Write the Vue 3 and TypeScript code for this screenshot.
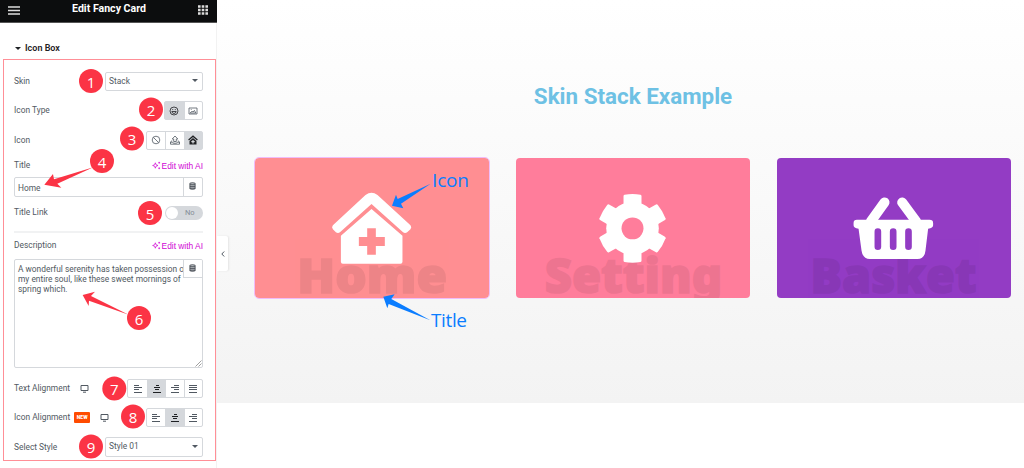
<template>
  <div class="page">
    <aside class="panel">
      <header class="panel-header">
        <svg class="menu" viewBox="0 0 12 9"><path d="M0 1h12M0 4.5h12M0 8h12" /></svg>
        <span>Edit Fancy Card</span>
        <svg class="apps" viewBox="0 0 10 10"><path d="M0 1.5h10M0 5h10M0 8.5h10" /></svg>
      </header>
      <div class="section-title"><i class="caret" />Icon Box</div>
      <div class="controls">
        <div class="row">
          <label>Skin</label>
          <div class="select">Stack<i class="caret" /></div>
        </div>
        <div class="row">
          <label>Icon Type</label>
          <div class="choices">
            <span class="active">
              <svg viewBox="0 0 10 10"><circle cx="5" cy="5" r="4" /><path d="M3.2 3.6h1M5.8 3.6h1M2.8 5.5h4.4Q6.8 7.5 5 7.5T2.8 5.5" /></svg>
            </span>
            <span>
              <svg viewBox="0 0 10 10"><path d="M1 2h8v6H1zM2.2 7l2-2 1 1 1.2-1.6L7.8 7zM2.8 3.5h.8" /></svg>
            </span>
          </div>
        </div>
        <div class="row">
          <label>Icon</label>
          <div class="choices">
            <span>
              <svg viewBox="0 0 10 10"><circle cx="5" cy="5" r="3.8" /><path d="M2.4 2.4l5.2 5.2" /></svg>
            </span>
            <span>
              <svg viewBox="0 0 10 10"><path d="M3.7 6.5V4H2.2L5 1 7.8 4H6.3v2.5zM2.2 5.6L.5 6.9v2.3h9V6.9L7.8 5.6M.8 7.2h2l.6 1h3.2l.6-1h2" /></svg>
            </span>
            <span class="active">
              <svg viewBox="0 0 10 10"><path class="bold" d="M.6 5L5 1.2 9.4 5" /><path class="solid" fill-rule="evenodd" d="M5 3.1l3.5 3V9.5h-7V6.1zM4.4 5v1.1H3.3v1.2h1.1v1.1h1.2V7.3h1.1V6.1H5.6V5z" /></svg>
            </span>
          </div>
        </div>
        <div class="row label-row title-label">
          <label>Title</label>
          <a class="ai"><svg viewBox="0 0 10 10"><path :d="sparklePath" /></svg>Edit with AI</a>
        </div>
        <div class="input">
          <span>Home</span>
          <i class="dynamic"><svg viewBox="0 0 8 9"><path :d="databasePath" /></svg></i>
        </div>
        <div class="row link-row">
          <label>Title Link</label>
          <div class="switch"><i />No</div>
        </div>
        <hr />
        <div class="row label-row">
          <label>Description</label>
          <a class="ai"><svg viewBox="0 0 10 10"><path :d="sparklePath" /></svg>Edit with AI</a>
        </div>
        <div class="textarea">
          A wonderful serenity has taken possession of<br />my entire soul, like these sweet mornings of<br />spring which.
          <i class="dynamic"><svg viewBox="0 0 8 9"><path :d="databasePath" /></svg></i>
          <svg class="grip" viewBox="0 0 7 7"><path d="M.5 6.5l6-6M3.5 6.5l3-3" /></svg>
        </div>
        <div class="row align-row">
          <label>Text Alignment</label>
          <svg class="monitor" viewBox="0 0 9 9"><path d="M1 1.5h7v5H1zM3 8.2h3" /></svg>
          <div class="choices">
            <span v-for="(d, i) in alignIcons" :key="i" :class="{ active: i === 1 }">
              <svg viewBox="0 0 10 10"><path class="lines" :d="d" /></svg>
            </span>
          </div>
        </div>
        <div class="row">
          <label>Icon Alignment</label>
          <b class="new">NEW</b>
          <svg class="monitor" viewBox="0 0 9 9"><path d="M1 1.5h7v5H1zM3 8.2h3" /></svg>
          <div class="choices">
            <span v-for="(d, i) in alignIcons.slice(0, 3)" :key="i" :class="{ active: i === 1 }">
              <svg viewBox="0 0 10 10"><path class="lines" :d="d" /></svg>
            </span>
          </div>
        </div>
        <div class="row">
          <label>Select Style</label>
          <div class="select">Style 01<i class="caret" /></div>
        </div>
      </div>
    </aside>

    <main class="preview">
      <h1>Skin Stack Example</h1>
      <div class="cards">
        <svg v-for="card in cards" :key="card.title" class="card" :class="card.kind" viewBox="0 0 702 421">
          <text :x="card.x" y="405" :textLength="card.width" lengthAdjust="spacingAndGlyphs">{{ card.title }}</text>
          <g v-if="card.kind === 'home'" transform="translate(-30 -25)">
            <path d="M362 136Q380 122 398 136L497 227Q502 233 497 239L487 248Q480 252 474 247L380 163 286 247Q280 252 273 248L264 239Q259 233 264 227Z" />
            <path fill-rule="evenodd" d="M380 178L473 258V336Q473 342 467 342H294Q288 342 288 336V258ZM367 236V262H342V289H367V315H393V289H420V262H393V236Z" />
          </g>
          <g v-else-if="card.kind === 'setting'" transform="translate(350 211)">
            <circle r="79" />
            <path v-for="n in 6" :key="n" :transform="`rotate(${n * 60})`" d="M-27-66V-97Q-27-100-24-101Q0-105 24-101Q27-100 27-97V-66Z" />
            <circle class="hole" r="33" />
          </g>
          <g v-else transform="translate(-38 -25)">
            <path class="handle" d="M361 158L320 215M414 158L456 215" />
            <path fill-rule="evenodd" d="M278 210H496Q507 210 507 220V227Q507 236 492 237L484 303Q481 328 460 328H317Q296 328 292 303L283 237Q268 236 268 227V220Q268 210 278 210ZM331 246V291A10 10 0 0 0 351 291V246A10 10 0 0 0 331 246ZM377 246V291A10 10 0 0 0 397 291V246A10 10 0 0 0 377 246ZM423 246V291A10 10 0 0 0 443 291V246A10 10 0 0 0 423 246Z" />
          </g>
        </svg>
      </div>
      <div class="collapse"><svg viewBox="0 0 4 6"><path d="M3.2.5L.8 3l2.4 2.5" /></svg></div>
    </main>

    <!-- numbered steps and arrows on top of the editor -->
    <svg class="notes" viewBox="0 0 1024 468">
      <g class="red">
        <path transform="translate(0 145) scale(.3333)" d="M280 67L162 103 159 87 133 119 184 128 172 116Z" />
        <path transform="translate(0 235) scale(.3333)" d="M386 239L273 183 285 170 248 180 266 213 267 197Z" />
        <g v-for="(step, i) in steps" :key="i" :transform="`translate(${step[0]} ${step[1]})`">
          <circle r="12" />
          <text y="6.6">{{ i + 1 }}</text>
        </g>
      </g>
      <g class="blue">
        <path transform="translate(245 150) scale(.3333)" d="M557 101L458 147 453 134 441 167 475 175 468 161Z" />
        <path transform="translate(245 150) scale(.3333)" d="M556 511L439 447 449 433 415 440 427 475 431 462Z" />
        <text x="432" y="186.5" textLength="37">Icon</text>
        <text x="431" y="326.5" textLength="36">Title</text>
      </g>
    </svg>
  </div>
</template>

<script setup lang="ts">
interface Card {
  title: string;
  kind: "home" | "setting" | "basket";
  x: number;
  width: number;
}

const cards: Card[] = [
  { title: "Home", kind: "home", x: 127, width: 450 },
  { title: "Setting", kind: "setting", x: 86, width: 533 },
  { title: "Basket", kind: "basket", x: 101, width: 498 },
];

const steps: [number, number][] = [
  [91, 81],
  [151, 109.5],
  [132, 138.5],
  [102, 161],
  [150, 213],
  [139, 318],
  [114.3, 388.5],
  [133, 416.5],
  [91, 446.5],
];

const alignIcons: string[] = [
  "M1 1.5h5M1 3.7h8M1 5.9h5M1 8.1h8",
  "M3.5 1.5h3M2 3.7h6M3 5.9h4M1 8.1h8",
  "M4 1.5h5M1 3.7h8M4 5.9h5M1 8.1h8",
  "M1 1.5h8M1 3.7h8M1 5.9h8M1 8.1h8",
];

const databasePath = "M1 1.3Q4 0 7 1.3V7.7Q4 9 1 7.7ZM1 3H7M1 5H7M1 7H7";
const sparklePath =
  "M3.7 2L4.5 4.2 6.7 5 4.5 5.8 3.7 8 2.9 5.8.7 5l2.2-.8zM8 .9v2M7 1.9h2M8 7.1v2M7 8.1h2";
</script>

<style>
body {
  background: #fff;
}
</style>

<style scoped>
.page {
  position: relative;
  display: flex;
  width: 1024px;
  height: 468px;
  overflow: hidden;
  font-family: Roboto, "Liberation Sans", sans-serif;
  font-size: 8.4px;
  color: #515962;
}

.page * {
  box-sizing: border-box;
}

svg {
  display: block;
  flex: none;
}

.panel {
  width: 217px;
  flex: none;
  border-right: 1px solid #f2f2f2;
}

.panel-header {
  display: flex;
  align-items: center;
  justify-content: space-between;
  width: 217px;
  height: 23px;
  padding: 0 9px 5px 8px;
  background: #0c0d0e;
  border-bottom: 1px solid #555;
  color: #fff;
  font-size: 10.6px;
  font-weight: 700;
}

.menu,
.apps {
  width: 12px;
  height: 9px;
  margin-top: 3px;
  stroke: #ddd;
  stroke-width: 1.6;
}

.apps {
  width: 10px;
  height: 10px;
  stroke-width: 2.4;
  stroke-dasharray: 2.6 1.1;
}

.section-title {
  display: flex;
  align-items: center;
  gap: 4px;
  height: 36px;
  padding: 14px 0 0 15px;
  color: #1f2124;
  font-size: 9px;
  font-weight: 600;
}

.caret {
  flex: none;
  border: 3px solid transparent;
  border-top-color: currentColor;
  border-bottom: 0;
}

.controls {
  width: 213px;
  height: 402px;
  margin-left: 3px;
  padding: 7px 12px 0 10px;
  border: 1px solid #ff8f97;
}

.row {
  display: flex;
  align-items: center;
  height: 29.3px;
}

label {
  margin-top: -1px;
  white-space: nowrap;
}

.select {
  display: flex;
  align-items: center;
  justify-content: space-between;
  width: 98px;
  height: 19.5px;
  margin-left: auto;
  padding: 0 4px 2px 3px;
  border: 1px solid #d5d8dc;
  border-radius: 2px;
}

.choices {
  display: flex;
  height: 19px;
  margin-left: auto;
  border: 1px solid #d5d8dc;
  border-radius: 2px;
}

.choices span {
  display: grid;
  place-items: center;
  width: 18.4px;
}

.choices span + span {
  border-left: 1px solid #d5d8dc;
}

.choices .active {
  background: #d5d8dc;
  color: #1f2124;
}

.choices svg {
  width: 10px;
  height: 10px;
  fill: none;
  stroke: currentColor;
  stroke-width: 0.8;
}

.choices .bold {
  stroke-width: 1.3;
}

.choices .solid {
  fill: currentColor;
  stroke: none;
}

.choices .lines {
  stroke-width: 1;
  shape-rendering: crispEdges;
}

.label-row {
  height: 26px;
  justify-content: space-between;
}

.title-label {
  height: 22.1px;
}

.ai {
  display: flex;
  align-items: center;
  gap: 1px;
  color: #d004d4;
  font-family: "Liberation Sans", sans-serif;
  font-size: 8.4px;
}

.ai svg {
  width: 9px;
  height: 9px;
  fill: none;
  stroke: currentColor;
  stroke-width: 0.8;
}

.input {
  display: flex;
  height: 20px;
  border: 1px solid #d5d8dc;
  border-radius: 2px;
}

.input span {
  flex: 1;
  padding: 5px 3px 0;
  line-height: 10px;
}

.dynamic {
  display: flex;
  justify-content: center;
  width: 19.5px;
  padding-top: 4px;
  border-left: 1px solid #d5d8dc;
}

.dynamic svg {
  width: 7px;
  height: 8px;
  fill: #b8bcc1;
  stroke: #3f444b;
  stroke-width: 0.9;
}

.link-row {
  height: 32px;
  margin-bottom: 2px;
}

.switch {
  position: relative;
  width: 38px;
  height: 14px;
  margin-left: auto;
  padding-left: 20px;
  border-radius: 7px;
  background: #d5d8dc;
  color: #858d97;
  font-size: 7.5px;
  line-height: 14px;
}

.switch i {
  position: absolute;
  top: 1px;
  left: 1px;
  width: 12px;
  height: 12px;
  border-radius: 50%;
  background: #fff;
}

hr {
  height: 2px;
  margin: 0;
  border: 0;
  background: #f1f2f3;
}

.textarea {
  position: relative;
  height: 109px;
  padding: 4px 3px;
  overflow: hidden;
  border: 1px solid #d5d8dc;
  border-radius: 2px;
  font-size: 8.4px;
  line-height: 10px;
  white-space: nowrap;
}

.textarea .dynamic {
  position: absolute;
  top: 0;
  right: 0;
  height: 18px;
  border-bottom: 1px solid #d5d8dc;
  background: #fff;
}

.grip {
  position: absolute;
  right: 0;
  bottom: 0;
  width: 7px;
  height: 7px;
  stroke: #777;
  stroke-width: 0.7;
}

.align-row {
  margin-top: 6px;
}

.monitor {
  width: 9px;
  height: 9px;
  margin-left: 10px;
  fill: none;
  stroke: #515962;
  stroke-width: 1;
}

.new {
  width: 16px;
  height: 11px;
  margin-left: 4px;
  border-radius: 1px;
  background: #ff4b00;
  color: #fff;
  font-size: 5px;
  font-weight: 900;
  line-height: 11px;
  text-align: center;
}

.preview {
  position: relative;
  flex: 1;
  height: 403px;
  background: linear-gradient(#fff, #f3f3f3);
}

h1 {
  height: 158px;
  margin: 0;
  padding: 82px 0 0 25px;
  color: #6ec1e4;
  font-size: 22.4px;
  font-weight: 700;
  line-height: 28px;
  text-align: center;
}

.cards {
  display: flex;
  gap: 27.5px;
  padding-left: 38px;
}

.card {
  width: 233.7px;
  height: 140.4px;
  border-radius: 4px;
  fill: #fff;
}

.card text {
  fill: #000;
  stroke: #000;
  stroke-width: 5;
  opacity: 0.07;
  font-family: "Noto Sans", "Open Sans", sans-serif;
  font-size: 145px;
  font-weight: 900;
}

.home {
  background: #ff8e92;
  outline: 1px solid #f0bdfa;
}

.setting {
  background: #ff7d9b;
}

.hole {
  fill: #ff7d9b;
}

.basket {
  background: #933cc4;
}

.handle {
  stroke: #fff;
  stroke-width: 30;
  stroke-linecap: round;
}

.collapse {
  position: absolute;
  top: 236px;
  left: 0;
  display: grid;
  place-items: center;
  width: 11px;
  height: 35px;
  border-radius: 0 2px 2px 0;
  background: #fff;
  box-shadow: 1px 0 2px rgba(0, 0, 0, 0.08);
}

.collapse svg {
  width: 4px;
  height: 6px;
  fill: none;
  stroke: #515962;
}

.notes {
  position: absolute;
  inset: 0;
  width: 1024px;
  height: 468px;
  font-family: "Open Sans", "Noto Sans", sans-serif;
}

.red {
  fill: #fb3445;
}

.red text {
  fill: #fff;
  font-size: 15px;
  text-anchor: middle;
}

.blue {
  fill: #0b7dff;
  font-size: 19px;
}
</style>
